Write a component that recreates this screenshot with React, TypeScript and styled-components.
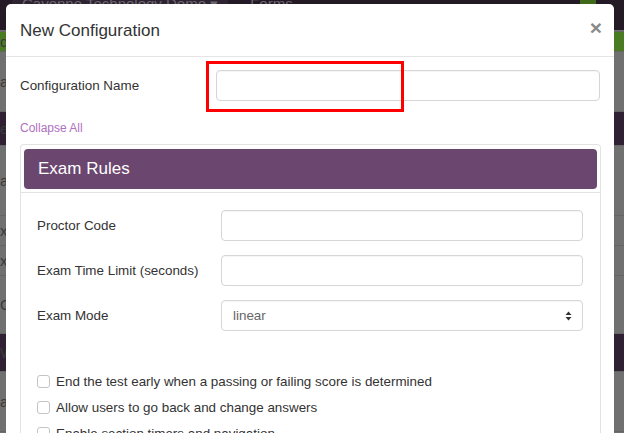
import React from 'react'
import styled, { createGlobalStyle } from 'styled-components'

const GlobalStyle = createGlobalStyle`
  html, body {
    margin: 0;
    padding: 0;
    overflow: hidden;
    background: #6e6e6e;
  }
  * {
    box-sizing: border-box;
  }
`

const Screen = styled.div`
  position: relative;
  width: 624px;
  height: 433px;
  overflow: hidden;
  font-family: 'Liberation Sans', Arial, sans-serif;
`

// dimmed page behind the modal
const BackPage = styled.div`
  display: flex;
  flex-direction: column;
  height: 100%;
  background: #707070;
`

const NavBar = styled.div`
  display: flex;
  align-items: flex-start;
  height: 30px;
  padding: 0 28px 0 12px;
  gap: 12px;
  background: #241a26;
  color: #6d6570;
  font-size: 15px;
  line-height: 8px;
  overflow: hidden;
`

const NavItem = styled.span<{ $boxed?: boolean }>`
  padding: 0 10px;
  height: 12px;
  white-space: nowrap;
  flex-shrink: 0;
  overflow: hidden;
  background: ${p => (p.$boxed ? '#2e2330' : 'transparent')};
`

const NavButton = styled.span`
  margin-left: auto;
  width: 16px;
  height: 8px;
  background: #3f6a19;
`

const Band = styled.div<{ $h: number; $tone: 'dark' | 'gray' | 'green' }>`
  height: ${p => p.$h}px;
  flex-shrink: 0;
  border-bottom: 1px solid #656565;
  color: #3a3a3a;
  font-size: 15px;
  line-height: ${p => p.$h}px;
  background: ${p =>
    p.$tone === 'dark' ? '#2f2033' : p.$tone === 'green' ? '#4a7a22' : '#707070'};
`

const Overlay = styled.div`
  position: absolute;
  inset: 0;
  padding: 4px 10px 0 6px;
`

const Modal = styled.div`
  width: 608px;
  height: 100%;
  background: #fff;
  border-radius: 5px 5px 0 0;
  color: #333;
  position: relative;
`

const Header = styled.div`
  display: flex;
  align-items: center;
  justify-content: space-between;
  height: 53px;
  padding: 2px 12px 0 14px;
  border-bottom: 1px solid #e5e5e5;
`

const Title = styled.h4`
  margin: 0;
  font-size: 17px;
  font-weight: normal;
  color: #333;
`

const Close = styled.span`
  font-size: 21px;
  font-weight: bold;
  color: #8a8a8a;
  line-height: 1;
  margin-top: -8px;
`

const Body = styled.div`
  padding: 13px 14px 0 14px;
`

const TopRow = styled.div`
  display: grid;
  grid-template-columns: 196px 1fr;
  align-items: center;
`

const Label = styled.label`
  font-size: 13.4px;
  color: #333;
`

const Input = styled.div`
  height: 31px;
  border: 1px solid #d6d6d6;
  border-radius: 4px;
  background: #fff;
  box-shadow: inset 0 1px 1px rgba(0, 0, 0, 0.04);
`

const Select = styled(Input)`
  display: flex;
  align-items: center;
  justify-content: space-between;
  padding: 0 10px 0 11px;
  font-size: 13.4px;
  color: #666;
`

const Arrows = styled.svg`
  width: 7px;
  height: 10px;
`

const Highlight = styled.div`
  position: absolute;
  left: 200px;
  top: 57px;
  width: 198px;
  height: 51px;
  border: 3px solid #f00;
`

const CollapseLink = styled.a`
  display: block;
  margin-top: 20px;
  font-size: 12px;
  color: #b070c0;
  text-decoration: none;
`

const Panel = styled.div`
  margin-top: 9px;
  border: 1px solid #e3e3e3;
  border-bottom: none;
  border-radius: 4px 4px 0 0;
  padding: 4px 3px 0 3px;
  width: 581px;
`

const PanelHeading = styled.div`
  height: 40px;
  background: #6b466f;
  border-radius: 4px;
  display: flex;
  align-items: center;
  padding-left: 14px;
  color: #fff;
  font-size: 17px;
`

const PanelBody = styled.div`
  margin: 3px -3px 0 -3px;
  border-top: 1px solid #e3e3e3;
  padding: 17px 17px 0 16px;
  display: flex;
  flex-direction: column;
  gap: 14px;
`

const FieldRow = styled.div`
  display: grid;
  grid-template-columns: 184px 1fr;
  align-items: center;
`

const Checks = styled.div`
  display: flex;
  flex-direction: column;
  gap: 10px;
  margin-top: 28px;
`

const CheckRow = styled.label`
  display: flex;
  align-items: center;
  gap: 6px;
  font-size: 13.4px;
  color: #333;
  height: 16px;
  white-space: nowrap;
`

const Box = styled.span`
  width: 13px;
  height: 13px;
  flex-shrink: 0;
  border: 1px solid #c4c4c4;
  border-radius: 3px;
  background: #fff;
`

const fields = ['Proctor Code', 'Exam Time Limit (seconds)']

const checks = [
  'End the test early when a passing or failing score is determined',
  'Allow users to go back and change answers',
  'Enable section timers and navigation'
]

const App: React.FC = () => {
  return (
    <Screen>
      <GlobalStyle />
      <BackPage>
        <NavBar>
          <NavItem $boxed>Cayenne Technology Demo ▾</NavItem>
          <NavItem>Forms</NavItem>
          <NavButton />
        </NavBar>
        <Band $h={2} $tone="gray" />
        <Band $h={20} $tone="green">d</Band>
        <Band $h={60} $tone="gray">ap</Band>
        <Band $h={34} $tone="dark">e</Band>
        <Band $h={70} $tone="gray">a</Band>
        <Band $h={30} $tone="gray">x</Band>
        <Band $h={30} $tone="gray">x</Band>
        <Band $h={58} $tone="gray">Gr</Band>
        <Band $h={38} $tone="dark">W</Band>
        <Band $h={60} $tone="gray">a</Band>
      </BackPage>
      <Overlay>
        <Modal>
          <Header>
            <Title>New Configuration</Title>
            <Close>×</Close>
          </Header>
          <Body>
            <TopRow>
              <Label>Configuration Name</Label>
              <Input />
            </TopRow>
            <CollapseLink href="#">Collapse All</CollapseLink>
            <Panel>
              <PanelHeading>Exam Rules</PanelHeading>
              <PanelBody>
                {fields.map(f => (
                  <FieldRow key={f}>
                    <Label>{f}</Label>
                    <Input />
                  </FieldRow>
                ))}
                <FieldRow>
                  <Label>Exam Mode</Label>
                  <Select>
                    <span>linear</span>
                    <Arrows viewBox="0 0 7 10">
                      <path d="M3.5 0.5 L6.5 4 H0.5 Z M3.5 9.5 L6.5 6 H0.5 Z" fill="#333" />
                    </Arrows>
                  </Select>
                </FieldRow>
                <Checks>
                  {checks.map(c => (
                    <CheckRow key={c}>
                      <Box />
                      {c}
                    </CheckRow>
                  ))}
                </Checks>
              </PanelBody>
            </Panel>
          </Body>
          <Highlight />
        </Modal>
      </Overlay>
    </Screen>
  )
}

export default App
